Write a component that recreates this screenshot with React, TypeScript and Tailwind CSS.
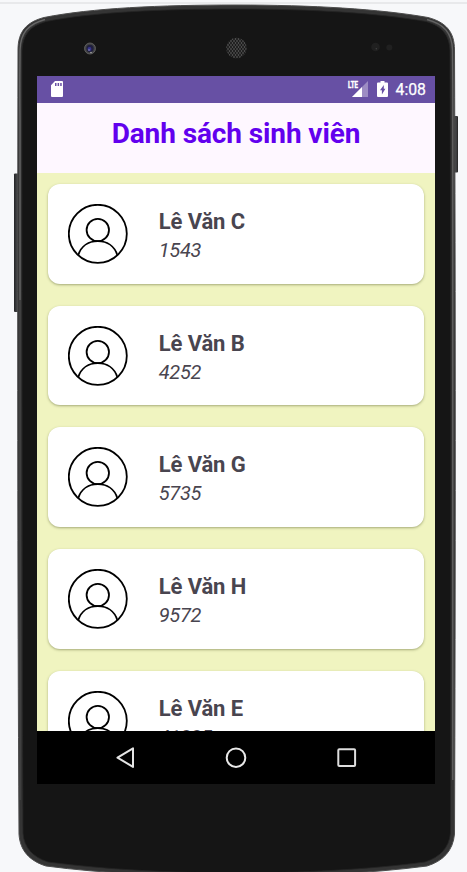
import React from "react";

const students = [
  { name: "Lê Văn C", code: "1543" },
  { name: "Lê Văn B", code: "4252" },
  { name: "Lê Văn G", code: "5735" },
  { name: "Lê Văn H", code: "9572" },
  { name: "Lê Văn E", code: "41235" },
];

const BODY =
  "M18 50C18 31 27 22 44 17.5C92 8 160 5 236 5C312 5 380 9 428 17.5C445 22 454.5 31 454.5 50C455.5 300 455.5 580 454.5 834C453 851 443 861 427 866C370 873.5 300 876.5 236 876.5C172 876.5 102 873.5 46 866C30 861 20 851 19 834C17.5 580 17.5 300 18 50Z";
const FACE =
  "M22 51C22.5 35 30 26 46 21.5C94 12 160 9 236 9C312 9 378 13 426 21.5C442 26 449.5 35 450 51C451 300 451 580 450.5 833C449 848 440 857 425 862C370 869.5 300 873 236 873C172 873 104 869.5 48 862C33 857 24 848 23 833C22 580 22 300 22 51Z";

function DeviceBody() {
  return (
    <svg className="absolute inset-0" width="467" height="872" viewBox="0 0 467 872" aria-hidden="true">
      <defs>
        <linearGradient id="key" x1="0" x2="1">
          <stop offset="0" stopColor="#222325" />
          <stop offset="0.6" stopColor="#454648" />
          <stop offset="1" stopColor="#222" />
        </linearGradient>
        <pattern id="mesh" width="3" height="4" patternUnits="userSpaceOnUse">
          <rect width="3" height="4" fill="#4c4c4c" />
          <circle cx="1.5" cy="1" r="1" fill="#151515" />
          <circle cx="0" cy="3" r="1" fill="#151515" />
          <circle cx="3" cy="3" r="1" fill="#151515" />
        </pattern>
      </defs>
      <rect y="2" width="467" height="2" fill="#e8e9eb" />
      <rect x="14" y="173.5" width="5" height="138.5" rx="1" fill="url(#key)" />
      <rect x="453" y="116" width="5" height="56.5" rx="1" fill="url(#key)" />
      <path d={BODY} fill="#343434" />
      <path d={BODY} fill="none" stroke="#4d4d4d" strokeWidth="1" />
      <path d={FACE} fill="#151515" stroke="#252525" strokeWidth="0.8" />
      <path d="M20 300V120C19.5 80 20 65 20 50C20.5 33 28 24 45 19.5" fill="none" stroke="#666" strokeWidth="1.4" />
      <path d="M452.8 780V120C453 80 452.5 65 452.5 50C452 33 444 24 427 19.5" fill="none" stroke="#626262" strokeWidth="1.4" />
      <path d="M20 300V800" fill="none" stroke="#484848" strokeWidth="1.2" />
      <circle cx="90" cy="48.5" r="5.5" fill="#444" stroke="#666" strokeWidth="0.8" />
      <circle cx="90" cy="48.5" r="3.7" fill="#20203e" />
      <circle cx="89.5" cy="49" r="1.9" fill="#36348f" />
      <circle cx="89" cy="50" r="0.7" fill="#aab" />
      <circle cx="91" cy="52.5" r="0.8" fill="#aaa" />
      <circle cx="236.5" cy="48" r="10.3" fill="url(#mesh)" />
      <circle cx="375.5" cy="47" r="4.3" fill="#202020" />
      <circle cx="376.3" cy="48.8" r="0.7" fill="#444" />
      <circle cx="389.3" cy="47.5" r="3" fill="#202020" />
    </svg>
  );
}

function StatusBar() {
  return (
    <div className="flex h-[26.5px] shrink-0 items-center bg-[#6750a4] pr-[9px] pl-[14px] text-white">
      <svg className="mr-auto block" width="12" height="16" viewBox="0 0 12 16">
        <path
          fillRule="evenodd"
          fill="currentColor"
          d="M4 0H11Q12 0 12 1V15Q12 16 11 16H1Q0 16 0 15V4.3ZM4 2V5H5.5V2ZM6.6 2V5H8.1V2ZM9.2 2V5H10.7V2Z"
        />
      </svg>
      <div className="relative h-4 w-5">
        <svg className="block" width="20" height="16" viewBox="0 0 20 16">
          <path d="M20 0V16H4Z" fill="#9c8cc3" />
          <path d="M14 6V16H4Z" fill="currentColor" />
        </svg>
        <span className="absolute top-0 left-0 origin-left scale-x-[.68] text-[9px] leading-[8px] font-bold [-webkit-text-stroke:0.5px_white]">
          LTE
        </span>
      </div>
      <svg className="ml-[9px] block" width="11" height="16" viewBox="0 0 11 16">
        <path
          fillRule="evenodd"
          fill="currentColor"
          d="M3.5 0H7.5V1.5H10Q11 1.5 11 2.5V15Q11 16 10 16H1Q0 16 0 15V2.5Q0 1.5 1 1.5H3.5ZM6.8 4L3 9.3H4.9V13.5L8.4 7.8H6.8Z"
        />
      </svg>
      <span className="ml-2 pt-[1px] text-[15.8px] leading-5 font-normal [-webkit-text-stroke:0.25px_white]">4:08</span>
    </div>
  );
}

function Avatar() {
  return (
    <svg className="block shrink-0" width="60" height="60" viewBox="0 0 60 60" fill="none" stroke="#000" strokeWidth="1.8">
      <circle cx="29.8" cy="29.8" r="29" />
      <circle cx="29.8" cy="26" r="11.2" />
      <path d="M10.2 51.2C13.2 42 20.8 37.2 29.8 37.2S46.4 42 49.4 51.2" />
    </svg>
  );
}

function StudentCard({ name, code }: { name: string; code: string }) {
  return (
    <li className="flex h-[99.7px] shrink-0 items-center rounded-[12px] bg-white pl-5 shadow-[0_1px_2.5px_rgba(60,70,20,0.42)]">
      <Avatar />
      <div className="ml-[30.7px] text-[#49454f]">
        <p className="pt-[3px] text-[22px] leading-[29px] font-bold tracking-[-0.1px]">{name}</p>
        <p className="text-[20px] leading-[28px] tracking-[-0.3px] italic">{code}</p>
      </div>
    </li>
  );
}

function NavigationBar() {
  return (
    <nav className="flex h-[53px] shrink-0 items-center bg-black pl-[77px]">
      <svg className="block" width="24" height="24" viewBox="0 0 24 24" fill="none" stroke="#e5e5e5" strokeWidth="2" strokeLinejoin="round">
        <path d="M19 2.3V20.9L3.5 11.6Z" />
      </svg>
      <svg className="ml-[86px] block" width="24" height="24" viewBox="0 0 24 24" fill="none" stroke="#e9e9e9" strokeWidth="2">
        <circle cx="12" cy="11.7" r="9.3" />
      </svg>
      <svg className="ml-[87px] block" width="24" height="24" viewBox="0 0 24 24" fill="none" stroke="#dedede" strokeWidth="2">
        <rect x="3.3" y="3.2" width="16.8" height="16.8" rx="1" />
      </svg>
    </nav>
  );
}

export default function App() {
  return (
    <div className="relative h-[872px] w-[467px] overflow-hidden bg-[#f7f8fa] pt-[76px] pl-[37px] font-['Roboto',sans-serif]">
      <DeviceBody />
      <main className="relative flex h-[708px] w-[398px] flex-col overflow-hidden bg-[#f0f4c0]">
        <StatusBar />
        <header className="h-[70.5px] shrink-0 bg-[#fef7ff] pt-[14px] text-center">
          <h1 className="text-[28px] leading-[34px] font-bold tracking-[-0.1px] text-[#6200ee]">Danh sách sinh viên</h1>
        </header>
        <ul className="flex min-h-0 flex-1 flex-col gap-[22px] overflow-hidden px-[11px] pt-[11px]">
          {students.map((student) => (
            <StudentCard key={student.code} {...student} />
          ))}
        </ul>
        <NavigationBar />
      </main>
    </div>
  );
}
